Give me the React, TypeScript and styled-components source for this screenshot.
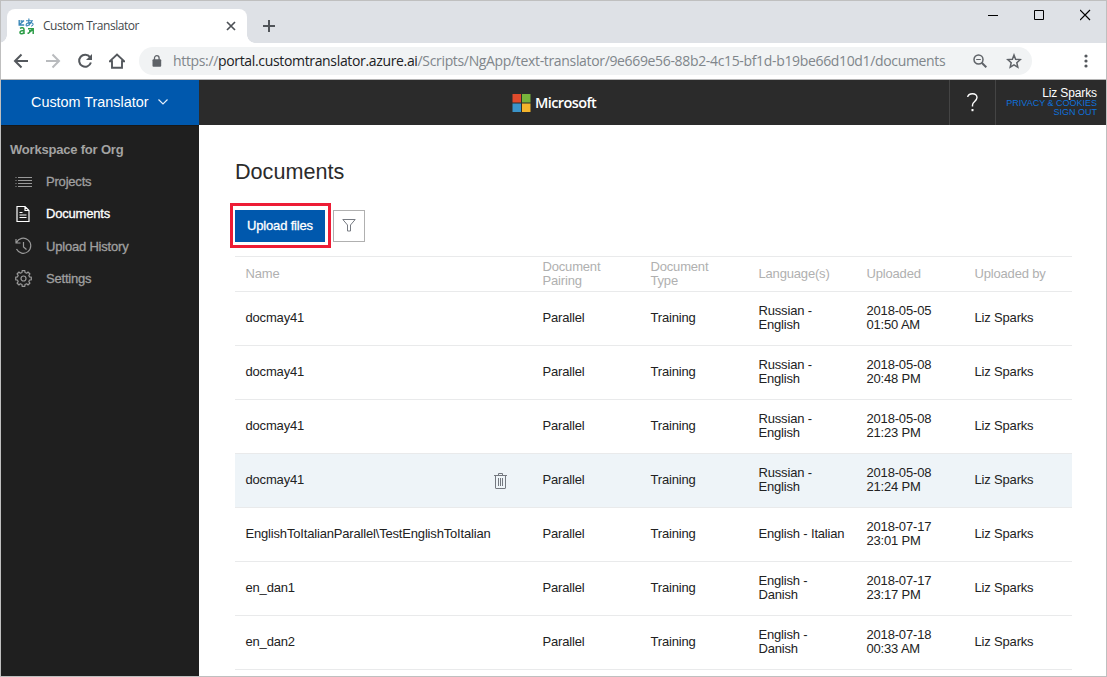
import React from "react";
import styled, { createGlobalStyle } from "styled-components";

const GlobalStyle = createGlobalStyle`
  * { box-sizing: border-box; }
  html, body { margin: 0; padding: 0; overflow: hidden; background: #fff; }
  body { font-family: "Liberation Sans", Arial, sans-serif; font-size: 13px; color: #222; }
  svg { display: block; flex: none; }
`;

const Window = styled.div`
  display: flex;
  flex-direction: column;
  width: 1107px;
  height: 677px;
  border: 1px solid #bfbfbf;
  background: #fff;
  overflow: hidden;
`;

/* Browser chrome */
const TabStrip = styled.div`
  display: flex;
  height: 42px;
  flex: none;
  padding: 8px 0 0 6px;
  background: #dee1e6;
`;

const Tab = styled.div`
  position: relative;
  display: flex;
  align-items: center;
  width: 240px;
  height: 34px;
  padding: 0 10px 0 11px;
  background: #fff;
  border-radius: 8px 8px 0 0;
  &::before,
  &::after {
    content: "";
    position: absolute;
    bottom: 0;
    width: 8px;
    height: 8px;
  }
  &::before {
    left: -8px;
    background: radial-gradient(circle at 0 0, transparent 7.5px, #fff 8px);
  }
  &::after {
    right: -8px;
    background: radial-gradient(circle at 100% 0, transparent 7.5px, #fff 8px);
  }
`;

const TabTitle = styled.span`
  flex: 1;
  margin-left: 8px;
  font: 12px/16px "Open Sans", "Noto Sans", sans-serif;
  letter-spacing: -0.45px;
  color: #45494d;
  white-space: nowrap;
`;

const NewTab = styled.div`
  padding: 11px 0 0 16px;
`;

const WindowControls = styled.div`
  display: flex;
  gap: 36px;
  margin-left: auto;
  padding-right: 15px;
`;

const Toolbar = styled.div`
  display: flex;
  align-items: center;
  height: 37px;
  flex: none;
  padding: 0 18px 0 12px;
  border-bottom: 1px solid #b5b5b5;
  background: #fff;
`;

const NavButtons = styled.div`
  display: flex;
  gap: 16px;
`;

const AddressBar = styled.div`
  display: flex;
  align-items: center;
  width: 893px;
  height: 28px;
  margin-left: 14px;
  padding: 0 10px 0 12px;
  border-radius: 14px;
  background: #f1f3f4;
`;

const Url = styled.span`
  flex: 1;
  margin-left: 10px;
  font: 14px/20px "Open Sans", "Noto Sans", sans-serif;
  letter-spacing: -0.34px;
  color: #80868b;
  white-space: nowrap;
  b { font-weight: 400; color: #202124; }
`;

const AddressActions = styled.div`
  display: flex;
  align-items: center;
  gap: 19px;
`;

const MenuDots = styled.div`
  margin-left: auto;
`;

/* Application header */
const AppHeader = styled.header`
  display: flex;
  height: 45px;
  flex: none;
  background: #2b2b2b;
`;

const ProductMenu = styled.div`
  display: flex;
  align-items: center;
  gap: 9px;
  width: 198px;
  padding: 0 0 2px 30px;
  background: #0058ad;
  color: #fff;
  font-size: 14.4px;
  white-space: nowrap;
`;

const Brand = styled.div`
  display: flex;
  align-items: center;
  flex: 1;
  gap: 4px;
  padding-left: 313px;
  color: #fff;
  font: 600 14.5px/20px "Open Sans", "Noto Sans", sans-serif;
  letter-spacing: -0.6px;
`;

const HelpButton = styled.div`
  display: flex;
  align-items: center;
  justify-content: center;
  width: 46px;
  border-left: 1px solid #444;
`;

const Account = styled.div`
  display: flex;
  flex-direction: column;
  align-items: flex-end;
  width: 111px;
  padding: 7px 9px 0 0;
  border-left: 1px solid #444;
  white-space: nowrap;
`;

const UserName = styled.span`
  font-size: 12px;
  line-height: 12px;
  letter-spacing: -0.12px;
  color: #fff;
`;

const AccountLink = styled.a`
  font-size: 9px;
  line-height: 9px;
  color: #0f71dc;
`;

/* Body */
const Body = styled.div`
  display: flex;
  flex: 1;
  min-height: 0;
`;

const Sidebar = styled.nav`
  width: 198px;
  flex: none;
  padding: 8px 0 0 9px;
  background: #1f1f1f;
  border-top: 1px solid #181818;
`;

const Workspace = styled.div`
  height: 31.3px;
  line-height: 31px;
  font-size: 13px;
  font-weight: 700;
  letter-spacing: -0.2px;
  color: #a3a3a3;
`;

const NavItem = styled.div<{ $active?: boolean }>`
  display: flex;
  align-items: center;
  height: 32.4px;
  gap: 13px;
  padding-left: 5px;
  font-size: 13px;
  line-height: 15px;
  letter-spacing: -0.2px;
  -webkit-text-stroke: 0.3px currentColor;
  color: ${(p) => (p.$active ? "#fff" : "#a0a0a0")};
`;

const Main = styled.main`
  flex: 1;
  padding: 33px 34px 0 36px;
  overflow: hidden;
`;

const Title = styled.h1`
  margin: 0;
  font-size: 21.6px;
  font-weight: 400;
  line-height: 27px;
  color: #2b2b2b;
`;

const Actions = styled.div`
  display: flex;
  align-items: center;
  gap: 2px;
  height: 45px;
  margin: 18px 0 8px -5px;
`;

const Highlight = styled.div`
  display: flex;
  padding: 4px 3px 3px 2px;
  border: 3px solid #ed1c35;
  width: 101px;
  height: 45px;
`;

const UploadButton = styled.button`
  width: 90px;
  height: 32px;
  padding: 0 0 2px;
  border: 0;
  background: #0058ad;
  color: #fff;
  font: 13px/15px "Liberation Sans", Arial, sans-serif;
  letter-spacing: -0.17px;
  -webkit-text-stroke: 0.3px #fff;
`;

const FilterButton = styled.button`
  display: flex;
  align-items: center;
  justify-content: center;
  width: 32px;
  height: 32px;
  padding: 0;
  border: 1px solid #b0b0b0;
  background: #fff;
`;

const Table = styled.div`
  width: 837px;
  border-top: 1px solid #e9eaeb;
`;

const Row = styled.div<{ $head?: boolean; $hover?: boolean }>`
  display: grid;
  grid-template-columns: 297px 108px 108px 108px 108px 1fr;
  align-items: center;
  height: ${(p) => (p.$head ? 35 : 54)}px;
  padding-left: 10.5px;
  padding-bottom: ${(p) => (p.$head ? 1 : 2)}px;
  border-bottom: 1px solid #e9eaeb;
  line-height: 14px;
  color: ${(p) => (p.$head ? "#b0b0b0" : "#222")};
  background: ${(p) => (p.$hover ? "#eef4f8" : "transparent")};
`;

const Cell = styled.div`
  white-space: pre-line;
  font-size: 13px;
  letter-spacing: -0.175px;
`;

const NameCell = styled(Cell)`
  display: flex;
  align-items: center;
  justify-content: space-between;
  padding-right: 35.5px;
`;

const TrashSlot = styled.span`
  padding-top: 3px;
`;

const Favicon = () => (
  <svg width="17" height="17" viewBox="0 0 17 17" fill="none">
    <path d="M1.200 2v5h5M1.500 6.500 6 2.500M2.500 3h2" stroke="#3a87b8" strokeWidth="1.400" />
    <path d="M8 2.700h7M11 .5c-.5 2-.3 5 .5 7M13.800 3C13 5.500 10 8.500 8.300 7.700 7.200 6 10.500 4 13.500 4.700c2.500.7 2 3-.5 3.500" stroke="#3a87b8" strokeWidth="1.100" />
    <path d="M2 10.300c1.500-1 4-.8 4 1.200v4.500M6 12.500c-2 0-4 .3-4 1.900 0 2 3 1.900 4 0" stroke="#2d9d48" strokeWidth="1.500" />
    <path d="M10 10.800h5.200V16M15 11l-4.800 4.500M9.500 15.200h2M11 12.800h3" stroke="#2d9d48" strokeWidth="1.500" />
  </svg>
);

const docRows = [
  ["docmay41", "Russian -\nEnglish", "2018-05-05\n01:50 AM"],
  ["docmay41", "Russian -\nEnglish", "2018-05-08\n20:48 PM"],
  ["docmay41", "Russian -\nEnglish", "2018-05-08\n21:23 PM"],
  ["docmay41", "Russian -\nEnglish", "2018-05-08\n21:24 PM"],
  ["EnglishToItalianParallel\\TestEnglishToItalian", "English - Italian", "2018-07-17\n23:01 PM"],
  ["en_dan1", "English -\nDanish", "2018-07-17\n23:17 PM"],
  ["en_dan2", "English -\nDanish", "2018-07-18\n00:33 AM"],
];
const hoveredRow = 3;

const TrashIcon = () => (
  <svg width="13" height="17" viewBox="0 0 13 17" fill="none" stroke="#747880">
    <path d="M0 2.500h13M4.500 2.500v-2h4v2M1.500 2.500v12.500q0 .5.5.5h9q.5 0 .5-.5V2.500M4.500 5v8M6.500 5v8M8.500 5v8" />
  </svg>
);

const gearPath = Array.from({ length: 8 }, (_, i) => {
  const at = (r: number, deg: number) => {
    const a = ((i * 45 + deg - 90) * Math.PI) / 180;
    return `${(8.5 + r * Math.cos(a)).toFixed(2)} ${(8.5 + r * Math.sin(a)).toFixed(2)}`;
  };
  return `${i ? "L" : "M"}${at(6.2, -14)}L${at(7.9, -10)}L${at(7.9, 10)}L${at(6.2, 14)}`;
}).join("") + "Z";

export default function App() {
  return (
    <>
      <GlobalStyle />
      <Window>
        <TabStrip>
          <Tab>
            <Favicon />
            <TabTitle>Custom Translator</TabTitle>
            <svg width="12" height="12" viewBox="0 0 12 12" stroke="#4d5156" strokeWidth="1.700">
              <path d="m2 2 8 8m0-8-8 8" />
            </svg>
          </Tab>
          <NewTab>
            <svg width="12" height="12" viewBox="0 0 12 12" stroke="#505459" strokeWidth="2">
              <path d="M6 0v12M0 6h12" />
            </svg>
          </NewTab>
          <WindowControls>
            <svg width="10" height="11" viewBox="0 0 10 11" stroke="#000"><path d="M0 6.500h10" /></svg>
            <svg width="10" height="11" viewBox="0 0 10 11" stroke="#000" fill="none"><path d="M.5 1.500h9v9h-9z" /></svg>
            <svg width="11" height="12" viewBox="0.5 0 11 12" stroke="#000" strokeWidth="1.200"><path d="m.5 1 10 10m0-10-10 10" /></svg>
          </WindowControls>
        </TabStrip>

        <Toolbar>
          <NavButtons>
            <svg width="16" height="16" viewBox="0 0 16 16" fill="none" stroke="#54585d" strokeWidth="2"><path d="M15 8H2.500M8.500 1.500 2 8l6.500 6.500" /></svg>
            <svg width="16" height="16" viewBox="0 0 16 16" fill="none" stroke="#b9bbbe" strokeWidth="2"><path d="M1 8h12.500M7.500 1.500 14 8l-6.500 6.500" /></svg>
            <svg width="16" height="16" viewBox="0 0 16 16" fill="none" stroke="#54585d" strokeWidth="2"><path d="M13 4.200A6 6 0 1 0 13.900 9.500" /><path d="M15 1v6H9z" fill="#54585d" stroke="none" /></svg>
            <svg width="16" height="16" viewBox="0 0 16 16" fill="none" stroke="#54585d" strokeWidth="1.900"><path d="M.7 8.300H3v6.500h10V8.300h2.300L8 1.500z" /></svg>
          </NavButtons>
          <AddressBar>
            <svg width="12" height="12" viewBox="0 0 12 12" fill="none"><path d="M3.500 5V3a2.300 2.300 0 0 1 4.600 0v2" stroke="#5f6368" strokeWidth="1.300" /><rect x="1.500" y="4.200" width="8.700" height="7.600" rx="1" fill="#5f6368" /></svg>
            <Url>https://<b>portal.customtranslator.azure.ai</b>/Scripts/NgApp/text-translator/9e669e56-88b2-4c15-bf1d-b19be66d10d1/documents</Url>
            <AddressActions>
              <svg width="14" height="14" viewBox="0 0 14 14" fill="none" stroke="#5f6368" strokeWidth="1.500"><circle cx="5.500" cy="5.500" r="4.500" /><path d="m8.700 8.700 4.600 4.600" strokeWidth="2" /><path d="M3.200 5.500h4.600" strokeWidth="1" /></svg>
              <svg width="16" height="16" viewBox="0 0 16 16" fill="none" stroke="#5f6368" strokeWidth="1.500"><path d="m8 2 1.600 4.200 4.700.4-3.500 3.100 1 4.500L8 11.800l-3.800 2.400 1-4.500-3.500-3.100 4.700-.4z" /></svg>
            </AddressActions>
          </AddressBar>
          <MenuDots>
            <svg width="4" height="14" viewBox="0 0 4 14" fill="#54585d"><circle cx="2" cy="2" r="1.600" /><circle cx="2" cy="7" r="1.600" /><circle cx="2" cy="12" r="1.600" /></svg>
          </MenuDots>
        </Toolbar>

        <AppHeader>
          <ProductMenu>
            Custom Translator
            <svg width="10" height="6" viewBox="0 0 10 6" fill="none" stroke="#e4eefa" strokeWidth="1.200"><path d="m.5.500 4.500 4.500L9.500.500" /></svg>
          </ProductMenu>
          <Brand>
            <svg width="19" height="18" viewBox="0 0 19 18"><path fill="#e04b2c" d="M.5 0H9v8.500H.5z" /><path fill="#77b33c" d="M10 0h8.500v8.500H10z" /><path fill="#3b94c9" d="M.5 9.500H9V18H.5z" /><path fill="#f4b42c" d="M10 9.500h8.500V18H10z" /></svg>
            Microsoft
          </Brand>
          <HelpButton>
            <svg width="11" height="19" viewBox="0 0 11 19" fill="none" stroke="#fff" strokeWidth="1.400"><path d="M.7 4C1 2 3 .7 5.500.7c2.800 0 4.500 1.500 4.500 3.900 0 3.600-4.500 4.200-4.500 7.400v1.500" /><path d="M5.500 16v2.200" strokeWidth="2" /></svg>
          </HelpButton>
          <Account>
            <UserName>Liz Sparks</UserName>
            <AccountLink>PRIVACY &amp; COOKIES</AccountLink>
            <AccountLink>SIGN OUT</AccountLink>
          </Account>
        </AppHeader>

        <Body>
          <Sidebar>
            <Workspace>Workspace for Org</Workspace>
            <NavItem>
              <svg width="18" height="18" viewBox="0 0 18 18" stroke="#999"><path d="M.5 5.500h1M3 5.500h14M.5 8.500h1M3 8.500h14M.5 11.500h1M3 11.500h14M.5 14.500h1M3 14.500h14" /></svg>
              Projects
            </NavItem>
            <NavItem $active>
              <svg width="18" height="18" viewBox="0 0 18 18" fill="none" stroke="#fff" strokeWidth="1.200"><path d="M2 1.500h8l4 4v11H2zM10 1.500v4h4M4.500 7.500h3M4.500 10h7M4.500 12.500h7" /></svg>
              Documents
            </NavItem>
            <NavItem>
              <svg width="18" height="18" viewBox="0 0 18 18" fill="none" stroke="#999" strokeWidth="1.200"><path d="M1.500 5.500A7.500 7.500 0 1 1 1.500 12M1 2v4h4.500M8.500 5v5l3 2.500" /></svg>
              Upload History
            </NavItem>
            <NavItem>
              <svg width="18" height="18" viewBox="0 0 18 18" fill="none" stroke="#999" strokeWidth="1.200" strokeLinejoin="round"><path d={gearPath} /><circle cx="8.500" cy="8.500" r="2.500" /></svg>
              Settings
            </NavItem>
          </Sidebar>

          <Main>
            <Title>Documents</Title>
            <Actions>
              <Highlight>
                <UploadButton>Upload files</UploadButton>
              </Highlight>
              <FilterButton>
                <svg width="14" height="13" viewBox="0 0 14 13" fill="none" stroke="#777b82"><path d="M.8.5h12.400L8.500 6v6H5.500V6z" /></svg>
              </FilterButton>
            </Actions>
            <Table>
              <Row $head>
                <Cell>Name</Cell>
                <Cell>{"Document\nPairing"}</Cell>
                <Cell>{"Document\nType"}</Cell>
                <Cell>Language(s)</Cell>
                <Cell>Uploaded</Cell>
                <Cell>Uploaded by</Cell>
              </Row>
              {docRows.map(([name, languages, uploaded], i) => (
                <Row key={i} $hover={i === hoveredRow}>
                  <NameCell>
                    {name}
                    {i === hoveredRow && <TrashSlot><TrashIcon /></TrashSlot>}
                  </NameCell>
                  <Cell>Parallel</Cell>
                  <Cell>Training</Cell>
                  <Cell>{languages}</Cell>
                  <Cell>{uploaded}</Cell>
                  <Cell>Liz Sparks</Cell>
                </Row>
              ))}
            </Table>
          </Main>
        </Body>
      </Window>
    </>
  );
}
